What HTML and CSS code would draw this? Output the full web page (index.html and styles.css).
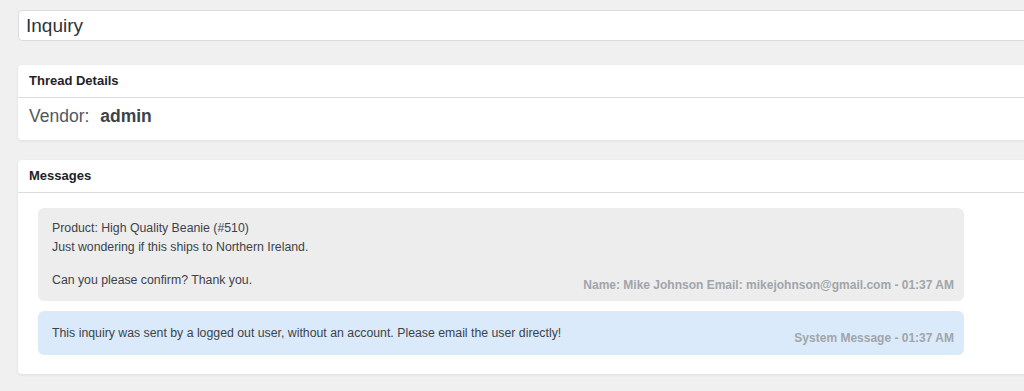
FILE: index.html
```html
<!DOCTYPE html>
<html lang="en">
<head>
<meta charset="UTF-8">
<meta name="viewport" content="width=device-width, initial-scale=1.0">
<title>Inquiry</title>
<link rel="stylesheet" href="styles.css">
</head>
<body>
<div class="page">
    <div class="subject">Inquiry</div>

    <div class="card">
        <div class="card-head">Thread Details</div>
        <div class="card-body vendor">
            <span class="vendor-label">Vendor:</span>
            <span class="vendor-name">admin</span>
        </div>
    </div>

    <div class="card">
        <div class="card-head">Messages</div>
        <div class="card-body messages">
            <div class="msg">
                <div class="msg-text">
                    <div class="msg-product">Product: High Quality Beanie (#510)</div>
                    Just wondering if this ships to Northern Ireland.<br><br>
                    Can you please confirm? Thank you.
                </div>
                <div class="msg-meta">Name: Mike Johnson Email: mikejohnson@gmail.com - 01:37 AM</div>
            </div>
            <div class="msg system">
                <div class="msg-text">This inquiry was sent by a logged out user, without an account. Please email the user directly!</div>
                <div class="msg-meta">System Message - 01:37 AM</div>
            </div>
        </div>
    </div>
</div>
</body>
</html>
```

FILE: styles.css
```css
 /* inquiry thread view */

 body {
     margin: 0;
     background-color: #f0f0f1;
     font-family: "Liberation Sans", Arial, sans-serif;
     color: #3c434a;
     overflow: hidden;
 }
 .page {
     width: 1040px;
     padding: 10px 0 0 18px;
 }
 .subject {
     height: 29px;
     line-height: 29px;
     padding-left: 7px;
     font-size: 19px;
     color: #2c3338;
     background-color: white;
     border: 1px solid #dcdcde;
     border-radius: 4px;
     margin-bottom: 24px;
 }
 .card {
     background-color: white;
     border-radius: 4px;
     box-shadow: 0 1px 3px rgba(0, 0, 0, 0.08);
     margin-bottom: 20px;
 }
 .card-head {
     height: 32px;
     line-height: 32px;
     padding-left: 11px;
     font-size: 13px;
     font-weight: bold;
     color: #1d2327;
     border-bottom: 1px solid #dcdcde;
 }
 .card-body {
     padding-left: 11px;
 }
 .vendor {
     height: 42px;
     line-height: 37px;
     font-size: 17.5px;
 }
 .vendor-label {
     color: #50575e;
     margin-right: 6px;
 }
 .vendor-name {
     font-weight: bold;
 }
 .messages {
     padding: 15px 94px 19px 20px;
     display: flex;
     flex-direction: column;
     gap: 10px;
 }
 .msg {
     display: flex;
     justify-content: space-between;
     align-items: flex-end;
     background-color: #ededed;
     border-radius: 6px;
     padding: 12px 10px 8px 14px;
     font-size: 12px;
     line-height: 16.5px;
 }
 .msg.system {
     background-color: #dbeafa;
     padding-top: 14px;
 }
 .msg-text {
     font-size: 12.3px;
     margin-bottom: 5px;
 }
 .msg-product {
     margin-bottom: 2px;
 }
 .msg-meta {
     font-weight: bold;
     color: #a0a5aa;
     white-space: nowrap;
 }
```
